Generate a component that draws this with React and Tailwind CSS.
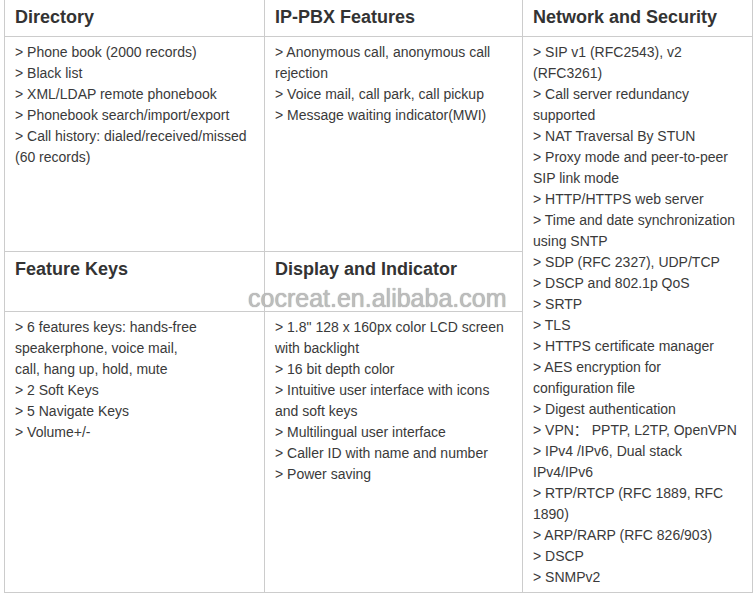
import React from "react";

const dir = [
  "> Phone book (2000 records)",
  "> Black list",
  "> XML/LDAP remote phonebook",
  "> Phonebook search/import/export",
  "> Call history: dialed/received/missed",
  "(60 records)",
];
const pbx = [
  "> Anonymous call, anonymous call",
  "rejection",
  "> Voice mail, call park, call pickup",
  "> Message waiting indicator(MWI)",
];
const keys = [
  "> 6 features keys: hands-free",
  "speakerphone, voice mail,",
  "call, hang up, hold, mute",
  "> 2 Soft Keys",
  "> 5 Navigate Keys",
  "> Volume+/-",
];
const disp = [
  '> 1.8" 128 x 160px color LCD screen',
  "with backlight",
  "> 16 bit depth color",
  "> Intuitive user interface with icons",
  "and soft keys",
  "> Multilingual user interface",
  "> Caller ID with name and number",
  "> Power saving",
];
const net = [
  "> SIP v1 (RFC2543), v2",
  "(RFC3261)",
  "> Call server redundancy",
  "supported",
  "> NAT Traversal By STUN",
  "> Proxy mode and peer-to-peer",
  "SIP link mode",
  "> HTTP/HTTPS web server",
  "> Time and date synchronization",
  "using SNTP",
  "> SDP (RFC 2327), UDP/TCP",
  "> DSCP and 802.1p QoS",
  "> SRTP",
  "> TLS",
  "> HTTPS certificate manager",
  "> AES encryption for",
  "configuration file",
  "> Digest authentication",
  "> VPN： PPTP, L2TP, OpenVPN",
  "> IPv4 /IPv6, Dual stack",
  "IPv4/IPv6",
  "> RTP/RTCP (RFC 1889, RFC",
  "1890)",
  "> ARP/RARP (RFC 826/903)",
  "> DSCP",
  "> SNMPv2",
];

function Head({ children, cls = "" }) {
  return (
    <div className={"border-r border-b border-[#cccccc] px-[10px] pt-[5px] text-[18px] leading-[24px] font-bold text-[#333333] whitespace-nowrap " + cls}>
      {children}
    </div>
  );
}

function Body({ lines, cls = "" }) {
  return (
    <div className={"border-r border-b border-[#cccccc] px-[10px] pt-[5px] text-[14px] leading-[21px] text-[#3a3a3a] " + cls}>
      {lines.map((l, i) => (
        <div key={i} className="whitespace-pre">{l}</div>
      ))}
    </div>
  );
}

export default function App() {
  return (
    <div
      className="relative w-[754px] h-[595px] bg-white overflow-hidden"
      style={{ fontFamily: '"Liberation Sans", Arial, "Noto Sans CJK SC", sans-serif' }}
    >
      <div className="ml-[4px] border-l border-[#cccccc] grid grid-cols-[260px_258px_230px] grid-rows-[37px_215px_60px_281px]">
        <Head cls="col-start-1 row-start-1">Directory</Head>
        <Head cls="col-start-2 row-start-1">IP-PBX Features</Head>
        <Head cls="col-start-3 row-start-1">Network and Security</Head>
        <Body lines={dir} cls="col-start-1 row-start-2" />
        <Body lines={pbx} cls="col-start-2 row-start-2" />
        <Body lines={net} cls="col-start-3 row-start-2 row-span-3" />
        <Head cls="col-start-1 row-start-3">Feature Keys</Head>
        <Head cls="col-start-2 row-start-3">Display and Indicator</Head>
        <Body lines={keys} cls="col-start-1 row-start-4" />
        <Body lines={disp} cls="col-start-2 row-start-4" />
      </div>
      <div className="absolute left-[248px] top-[286px] text-[25px] leading-[25px] text-[#bdbdbd] whitespace-nowrap pointer-events-none [text-shadow:0_0_1px_#8f8f8f]">
        cocreat.en.alibaba.com
      </div>
    </div>
  );
}
